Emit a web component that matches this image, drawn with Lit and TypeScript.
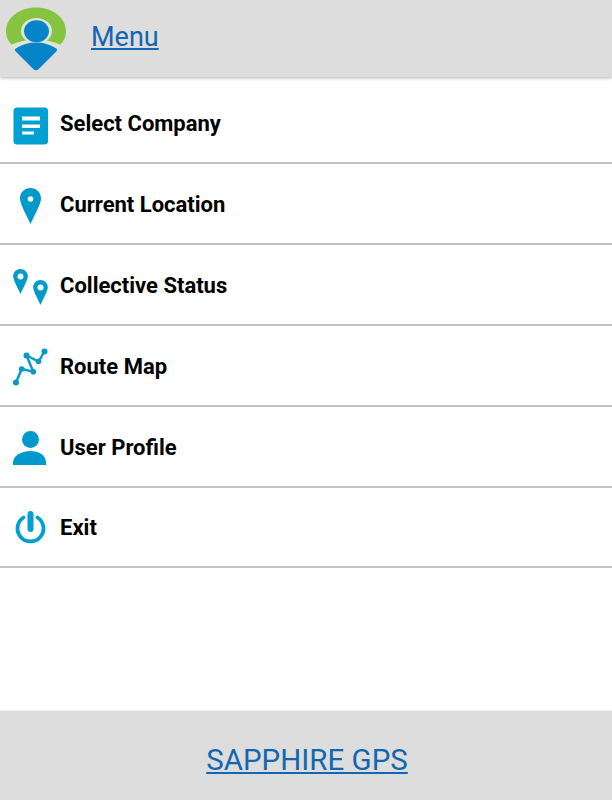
import { LitElement, html, css, svg } from 'lit';
import { customElement } from 'lit/decorators.js';

const BLUE = '#0099cc';

const icons = {
  company: svg`<rect x="13.500" y="107.500" width="34.500" height="37" rx="3.500" fill="#00a0d2"/><path d="M22 116.500h18v4H22zM22 124.500h18v3.500H22zM22 131.500h12v3H22z" fill="#fff"/>`,
  location: svg`<path d="M30.500 188c-6 0-10.500 4.500-10.500 10.500 0 5 5 14 10.500 25.500 5.500-11.500 10.500-20.500 10.500-25.500 0-6-4.500-10.500-10.500-10.500z" fill="${BLUE}"/><circle cx="30.500" cy="199" r="2.800" fill="#fff"/>`,
  collective: svg`<path d="M20.500 269c-4 0-7.300 3.200-7.300 7.200 0 3.500 3.500 9.500 7.300 17.800 3.800-8.300 7.300-14.300 7.300-17.800 0-4-3.300-7.200-7.300-7.200z" fill="${BLUE}"/><circle cx="20.500" cy="276.500" r="3" fill="#fff"/><path d="M40.500 280c-4 0-7.300 3.200-7.300 7.200 0 3.500 3.500 9.500 7.300 17.800 3.800-8.300 7.300-14.300 7.300-17.800 0-4-3.300-7.200-7.300-7.200z" fill="${BLUE}"/><circle cx="40.500" cy="287.500" r="3" fill="#fff"/>`,
  route: svg`<path d="M16 383.500L21.700 370L33.300 372.700L26.500 356.500L38.500 362.500L44.500 352.500" fill="none" stroke="${BLUE}" stroke-width="2.400"/><circle cx="16" cy="383.500" r="3" fill="${BLUE}"/><circle cx="21.700" cy="370" r="2.800" fill="${BLUE}"/><circle cx="33.300" cy="372.700" r="2.800" fill="${BLUE}"/><circle cx="26.500" cy="356.500" r="3" fill="${BLUE}"/><circle cx="38.500" cy="362.500" r="2.800" fill="${BLUE}"/><circle cx="44.500" cy="352.500" r="3" fill="${BLUE}"/>`,
  user: svg`<circle cx="30.500" cy="439.500" r="8.500" fill="${BLUE}"/><path d="M13 465v-2.500c0-6.500 8-11.500 17.500-11.500S46 456 46 462.500V465z" fill="${BLUE}"/>`,
  exit: svg`<path d="M23.500 517.500a13 13 0 1 0 14 0" fill="none" stroke="#00a0d2" stroke-width="3.800" stroke-linecap="round"/><path d="M30.500 514v15" stroke="#00a0d2" stroke-width="6" stroke-linecap="round"/>`,
};

// icon paths are in page coordinates, top is the viewBox offset for the row
const rows = [
  { label: 'Select Company', icon: icons.company, top: 83 },
  { label: 'Current Location', icon: icons.location, top: 164 },
  { label: 'Collective Status', icon: icons.collective, top: 245 },
  { label: 'Route Map', icon: icons.route, top: 326 },
  { label: 'User Profile', icon: icons.user, top: 406 },
  { label: 'Exit', icon: icons.exit, top: 487 },
];

@customElement('app-root')
export class AppRoot extends LitElement {
  static styles = css`
    :host {
      display: flex;
      flex-direction: column;
      height: 800px;
      background: #fff;
      font-family: Roboto, 'Liberation Sans', sans-serif;
    }

    header {
      display: flex;
      align-items: center;
      gap: 25px;
      height: 77px;
      padding-left: 6px;
      box-sizing: border-box;
      background: #dddddd;
      box-shadow: 0 1px 3px rgba(0, 0, 0, 0.3);
      position: relative;
    }

    a {
      color: #1366b0;
      text-decoration: underline;
    }

    header a {
      font-size: 27px;
      margin-top: -3px;
    }

    .logo {
      width: 60px;
      height: 64px;
    }

    ul {
      list-style: none;
      margin: 6.6px 0 0;
      padding: 0;
      flex: 1;
    }

    li {
      display: flex;
      align-items: center;
      gap: 4px;
      height: 80.8px;
      box-sizing: border-box;
      border-bottom: 2px solid #c2c2c2;
      font-size: 22px;
      font-weight: 700;
      color: #000;
    }

    li span {
      padding-top: 2px;
    }

    li svg {
      width: 56px;
      height: 80px;
      flex: none;
    }

    footer {
      display: flex;
      align-items: center;
      justify-content: center;
      height: 89px;
      padding-left: 2px;
      background: #dddddd;
      box-shadow: 0 -1px 1px rgba(0, 0, 0, 0.06);
    }

    footer a {
      font-size: 29.5px;
      margin-top: 8px;
    }
  `;

  render() {
    return html`
      <header>
        <svg class="logo" viewBox="6 6 60 64">
          <path d="M36 6.500c-16.500 0-30 10-30 24 0 5 2 9.500 6 13.500 7.500-3.500 15-5 24-5s16.500 1.500 24 5c4-4 6-8.500 6-13.500C66 16.500 52.500 6.500 36 6.500z" fill="#85c341"/>
          <path d="M11 44c7.500-3.500 16-5.500 25-5.500s17.500 2 25 5.500l-3 3H14z" fill="#dde6d2"/>
          <ellipse cx="36.500" cy="30" rx="15.500" ry="13" fill="#dde6d2"/>
          <ellipse cx="36.500" cy="30.200" rx="12.500" ry="11" fill="#0684c9"/>
          <path d="M16.500 47c5.500-3.500 12-5.500 19.500-5.500s14 2 19.500 5.500c1.700 1 1.900 2.200 1 3.300L38.500 68.200c-1.400 1.500-3.600 1.500-5 0L15.500 50.300c-.9-1.100-.7-2.300 1-3.300z" fill="#0684c9"/>
        </svg>
        <a href="#">Menu</a>
      </header>
      <ul>
        ${rows.map(
          (r) => html`<li>
            <svg viewBox="0 ${r.top} 56 80">${r.icon}</svg>
            <span>${r.label}</span>
          </li>`,
        )}
      </ul>
      <footer><a href="#">SAPPHIRE GPS</a></footer>
    `;
  }
}
